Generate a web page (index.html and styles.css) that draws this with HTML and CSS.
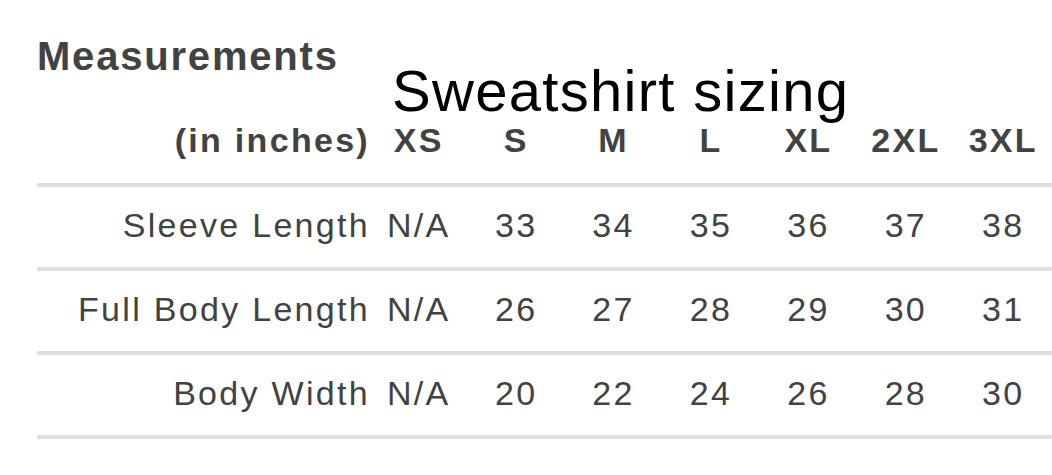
FILE: index.html
```html
<!DOCTYPE html>
<html lang="en">
<head>
<meta charset="utf-8">
<title>Measurements</title>
<link rel="stylesheet" href="styles.css">
</head>
<body>
<main class="sheet">
  <h1 class="title">Measurements</h1>
  <p class="annot">Sweatshirt sizing</p>
  <div class="table">
    <div class="row head">
      <div class="cell label">(in inches)</div>
      <div class="cell">XS</div>
      <div class="cell">S</div>
      <div class="cell">M</div>
      <div class="cell">L</div>
      <div class="cell">XL</div>
      <div class="cell">2XL</div>
      <div class="cell">3XL</div>
    </div>
    <div class="row">
      <div class="cell label">Sleeve Length</div>
      <div class="cell">N/A</div>
      <div class="cell">33</div>
      <div class="cell">34</div>
      <div class="cell">35</div>
      <div class="cell">36</div>
      <div class="cell">37</div>
      <div class="cell">38</div>
    </div>
    <div class="row">
      <div class="cell label">Full Body Length</div>
      <div class="cell">N/A</div>
      <div class="cell">26</div>
      <div class="cell">27</div>
      <div class="cell">28</div>
      <div class="cell">29</div>
      <div class="cell">30</div>
      <div class="cell">31</div>
    </div>
    <div class="row">
      <div class="cell label">Body Width</div>
      <div class="cell">N/A</div>
      <div class="cell">20</div>
      <div class="cell">22</div>
      <div class="cell">24</div>
      <div class="cell">26</div>
      <div class="cell">28</div>
      <div class="cell">30</div>
    </div>
  </div>
</main>
</body>
</html>
```

FILE: styles.css
```css
html, body {
  margin: 0;
  padding: 0;
  background: #ffffff;
}

body {
  font-family: "Liberation Sans", Arial, sans-serif;
  color: #424242;
  width: 1052px;
  height: 475px;
  overflow: hidden;
}

.sheet {
  position: relative;
  padding: 33px 0 0 37px;
}

.title {
  margin: 0;
  font-size: 40px;
  line-height: 46px;
  font-weight: 700;
  letter-spacing: 1.8px;
  color: #424242;
}

.annot {
  position: absolute;
  left: 392px;
  top: 62px;
  margin: 0;
  font-size: 58px;
  line-height: 58px;
  font-weight: 400;
  letter-spacing: 1.3px;
  color: #000000;
}

.table {
  display: flex;
  flex-direction: column;
}

.row {
  display: grid;
  grid-template-columns: 333px repeat(7, 1fr);
  align-items: center;
  height: 80px;
  border-bottom: 4px solid #dedde2;
  font-size: 34px;
  letter-spacing: 2.3px;
  line-height: 40px;
}

.row .cell {
  text-align: center;
  padding-bottom: 4px;
  white-space: nowrap;
}

.row .cell.label {
  text-align: right;
}

.row.head {
  height: auto;
  align-items: end;
  padding: 41px 0 23px 0;
  font-weight: 700;
}

.row.head .cell {
  padding-bottom: 0;
}
```
